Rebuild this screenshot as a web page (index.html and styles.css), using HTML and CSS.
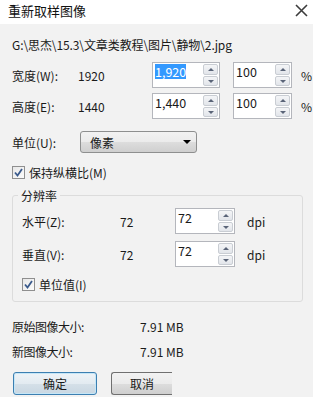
FILE: index.html
```html
<!DOCTYPE html>
<html>
<head>
<meta charset="utf-8">
<link rel="stylesheet" href="styles.css">
</head>
<body>
<div class="dialog">
  <div class="titlebar">
    <span class="title">重新取样图像</span>
    <svg class="close" width="13" height="13" viewBox="0 0 13 13"><path d="M1 1L12 12M12 1L1 12" stroke="#3c3c3c" stroke-width="1.6"/></svg>
  </div>
  <div class="content">
    <div class="path">G:\思杰\15.3\文章类教程\图片\静物\2.jpg</div>

    <div class="row dim first">
      <span class="lbl">宽度(W):</span>
      <span class="val">1920</span>
      <div class="spin w1"><span class="txt"><span class="sel">1,920</span></span><div class="btns"><span class="b up"></span><span class="b dn"></span></div></div>
      <div class="spin w2"><span class="txt">100</span><div class="btns"><span class="b up"></span><span class="b dn"></span></div></div>
      <span class="unit">%</span>
    </div>
    <div class="row dim second">
      <span class="lbl">高度(E):</span>
      <span class="val">1440</span>
      <div class="spin w1"><span class="txt">1,440</span><div class="btns"><span class="b up"></span><span class="b dn"></span></div></div>
      <div class="spin w2"><span class="txt">100</span><div class="btns"><span class="b up"></span><span class="b dn"></span></div></div>
      <span class="unit">%</span>
    </div>

    <div class="row unitrow">
      <span class="lbl short">单位(U):</span>
      <div class="select"><span>像素</span><span class="arrow"></span></div>
    </div>

    <div class="row check keep">
      <span class="cb"><svg width="9" height="9" viewBox="0 0 9 9"><path d="M1 4.5L3.5 7.5L8 1" fill="none" stroke="#3a5a8c" stroke-width="1.8"/></svg></span>
      <span>保持纵横比(M)</span>
    </div>

    <div class="group">
      <span class="legend">分辨率</span>
      <div class="row res r1">
        <span class="glbl">水平(Z):</span>
        <span class="gval">72</span>
        <div class="spin w3"><span class="txt">72</span><div class="btns"><span class="b up"></span><span class="b dn"></span></div></div>
        <span class="dpi">dpi</span>
      </div>
      <div class="row res r2">
        <span class="glbl">垂直(V):</span>
        <span class="gval">72</span>
        <div class="spin w3"><span class="txt">72</span><div class="btns"><span class="b up"></span><span class="b dn"></span></div></div>
        <span class="dpi">dpi</span>
      </div>
      <div class="row check unitval">
        <span class="cb"><svg width="9" height="9" viewBox="0 0 9 9"><path d="M1 4.5L3.5 7.5L8 1" fill="none" stroke="#3a5a8c" stroke-width="1.8"/></svg></span>
        <span>单位值(I)</span>
      </div>
    </div>

    <div class="row size s1">
      <span class="slbl">原始图像大小:</span>
      <span class="sval">7.91 MB</span>
    </div>
    <div class="row size s2">
      <span class="slbl">新图像大小:</span>
      <span class="sval">7.91 MB</span>
    </div>

    <div class="buttons">
      <div class="btn ok">确定</div>
      <div class="btn cancel">取消</div>
    </div>
  </div>
</div>
</body>
</html>
```

FILE: styles.css
```css
html, body {
  margin: 0;
  padding: 0;
}
body {
  width: 313px;
  height: 397px;
  overflow: hidden;
  background: #f2f2f2;
  font-family: "Noto Sans CJK SC", "DejaVu Sans", sans-serif;
  font-size: 12px;
  color: #1a1a1a;
}
.dialog {
  width: 313px;
  height: 397px;
  display: flex;
  flex-direction: column;
}
.titlebar {
  height: 24px;
  background: #ffffff;
  display: flex;
  align-items: center;
  justify-content: space-between;
  padding: 0 5px 0 8px;
  flex: none;
}
.title {
  font-size: 13px;
  color: #111;
  line-height: 16px;
  margin-top: -2px;
}
.close {
  margin-top: -4px;
}
.content {
  padding: 9px 0 0 12px;
  display: flex;
  flex-direction: column;
}
.path {
  height: 24px;
  line-height: 24px;
  font-size: 12px;
  letter-spacing: -0.1px;
}
.row {
  display: flex;
  align-items: center;
}
.dim {
  height: 26px;
}
.dim.first { margin-top: 5px; }
.dim.second { margin-top: 5px; }
.lbl {
  width: 66px;
}
.val {
  width: 74px;
}
.spin {
  height: 26px;
  box-sizing: border-box;
  border: 1px solid #b4b6bc;
  background: #fff;
  display: flex;
  justify-content: space-between;
  padding: 1px;
}
.spin .txt {
  padding-left: 1px;
  line-height: 15px;
  font-size: 12.5px;
}
.sel {
  background: #3399ff;
  color: #fff;
  display: inline-block;
  line-height: 15px;
}
.w1 { width: 68px; }
.w2 { width: 59px; margin-left: 13px; }
.w3 { width: 60px; }
.btns {
  width: 15px;
  display: flex;
  flex-direction: column;
  gap: 1px;
}
.b {
  flex: 1;
  border: 1px solid #c9cdd3;
  border-radius: 2px;
  background: linear-gradient(#f4f5f7, #e2e5ea);
  position: relative;
}
.b::after {
  content: "";
  position: absolute;
  left: 4px;
  top: 3px;
  border-left: 3px solid transparent;
  border-right: 3px solid transparent;
}
.b.up::after {
  border-bottom: 3px solid #5a6478;
}
.b.dn::after {
  border-top: 3px solid #5a6478;
}
.unit {
  margin-left: 9px;
}
.unitrow {
  height: 22px;
  margin-top: 12px;
}
.short { width: 68px; }
.select {
  width: 117px;
  height: 22px;
  box-sizing: border-box;
  border: 1px solid #8e8f8f;
  border-radius: 3px;
  background: linear-gradient(#f2f2f2 0%, #ebebeb 50%, #dddddd 51%, #cfcfcf 100%);
  display: flex;
  align-items: center;
  justify-content: space-between;
  padding: 0 5px 0 9px;
}
.arrow {
  width: 0;
  height: 0;
  border-left: 4px solid transparent;
  border-right: 4px solid transparent;
  border-top: 4px solid #000;
}
.check {
  height: 18px;
  gap: 4px;
}
.keep { margin-top: 10px; }
.cb {
  width: 11px;
  height: 11px;
  border: 1px solid #8f8f8f;
  background: linear-gradient(135deg, #e8e8e8, #fbfbfb);
  display: flex;
  align-items: center;
  justify-content: center;
}
.group {
  position: relative;
  margin-top: 14px;
  width: 291px;
  height: 107px;
  box-sizing: border-box;
  border: 1px solid #dcdcdc;
  border-radius: 3px;
  padding: 12px 0 0 9px;
}
.legend {
  position: absolute;
  top: -8px;
  left: 5px;
  padding: 0 3px;
  background: #f2f2f2;
  line-height: 16px;
}
.res {
  height: 26px;
}
.r2 { margin-top: 7px; }
.glbl { width: 98px; }
.gval { width: 55px; }
.dpi { margin-left: 12px; }
.unitval { margin-top: 8px; }
.size {
  height: 18px;
}
.s1 { margin-top: 15px; }
.s2 { margin-top: 7px; }
.slbl { width: 128px; letter-spacing: -0.5px; }
.buttons {
  display: flex;
  gap: 14px;
  margin-top: 12px;
  margin-left: 1px;
}
.btn {
  height: 23px;
  box-sizing: border-box;
  display: flex;
  align-items: center;
  justify-content: center;
  border: 1px solid #707070;
  border-radius: 3px;
  background: linear-gradient(#f2f2f2 0%, #ebebeb 50%, #dddddd 51%, #cfcfcf 100%);
}
.ok {
  width: 84px;
  border-color: #3c7fb1;
  background: linear-gradient(#eef3f7 0%, #e3ebf1 50%, #d5e0e8 51%, #c9d7e2 100%);
  box-shadow: inset 0 0 0 1px #c5e6f7;
}
.cancel {
  width: 61px;
  border-right: none;
  border-radius: 3px 0 0 3px;
}
```
